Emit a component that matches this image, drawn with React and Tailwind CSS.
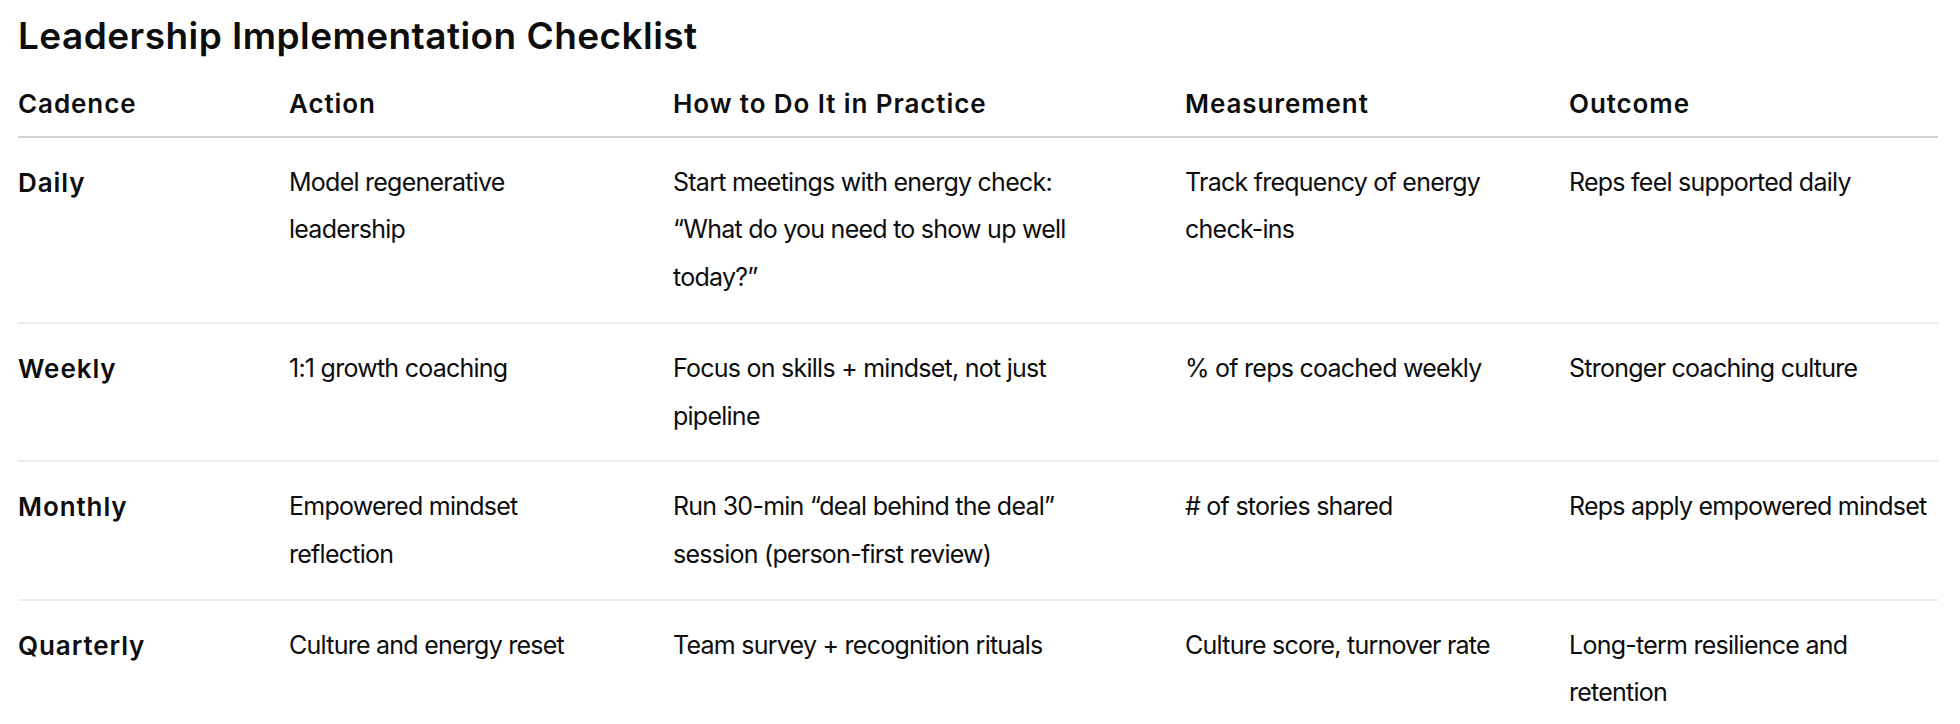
import React from 'react';

// Checklist rows: cadence / action / how / measurement / outcome
const ROWS = [
  {
    cadence: 'Daily',
    action: 'Model regenerative leadership',
    how: 'Start meetings with energy check: \u201CWhat do you need to show up well today?\u201D',
    measure: 'Track frequency of energy check-ins',
    outcome: 'Reps feel supported daily',
  },
  {
    cadence: 'Weekly',
    action: '1:1 growth coaching',
    how: 'Focus on skills + mindset, not just pipeline',
    measure: '% of reps coached weekly',
    outcome: 'Stronger coaching culture',
  },
  {
    cadence: 'Monthly',
    action: 'Empowered mindset reflection',
    how: 'Run 30-min \u201Cdeal behind the deal\u201D session (person-first review)',
    measure: '# of stories shared',
    outcome: 'Reps apply empowered mindset',
  },
  {
    cadence: 'Quarterly',
    action: 'Culture and energy reset',
    how: 'Team survey + recognition rituals',
    measure: 'Culture score, turnover rate',
    outcome: 'Long-term resilience and retention',
  },
];

const HEADERS = ['Cadence', 'Action', 'How to Do It in Practice', 'Measurement', 'Outcome'];
// right padding per column, so wrapping lands where the reference wraps
const PAD = ['pr-[48px]', 'pr-[48px]', 'pr-[90px]', 'pr-[48px]', ''];

const COLS = 'grid grid-cols-[271px_384px_512px_384px_1fr]';
const STRONG = 'text-[26px] font-semibold tracking-[0.035em]';

const App = () => {
  return (
    <div className="min-h-screen bg-white text-[#0d0d0d] font-['Inter','Liberation_Sans',sans-serif] pl-[18px] pr-[22px] pt-[12px]">
      <h1 className="text-[37px] leading-[48px] font-semibold tracking-[0.012em]">
        Leadership Implementation Checklist
      </h1>

      <div className="mt-[20px] text-[25px] leading-[47.7px] tracking-[-0.03em]">
        {/* header */}
        <div className={`${COLS} pb-[8px] border-b-2 border-[#d4d4d4]`}>
          {HEADERS.map((h, i) => (
            <div key={h} className={`${STRONG} ${PAD[i]}`}>
              {h}
            </div>
          ))}
        </div>

        {/* body */}
        {ROWS.map((r, idx) => (
          <div
            key={r.cadence}
            className={`${COLS} pt-[21px] pb-[20px] ${idx < ROWS.length - 1 ? 'border-b-2 border-[#ececec]' : ''}`}
          >
            <div className={`${STRONG} ${PAD[0]}`}>{r.cadence}</div>
            <div className={PAD[1]}>{r.action}</div>
            <div className={PAD[2]}>{r.how}</div>
            <div className={PAD[3]}>{r.measure}</div>
            <div>{r.outcome}</div>
          </div>
        ))}
      </div>
    </div>
  );
};

export default App;
